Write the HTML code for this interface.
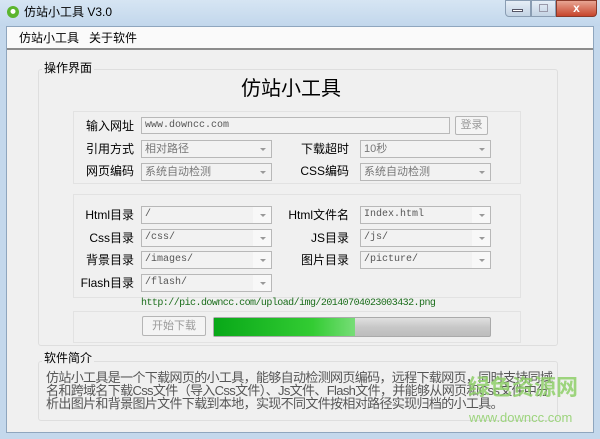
<!DOCTYPE html>
<html><head><meta charset="utf-8"><style>
*{margin:0;padding:0;box-sizing:border-box}
body{width:600px;height:439px;overflow:hidden;background:#c4d8ec;font-family:"Liberation Sans","Noto Sans CJK SC",sans-serif;font-size:12px;color:#000;position:relative}
.a{position:absolute}
.lbl{position:absolute;text-align:right;width:90px;font-size:12px;line-height:16px}
.inp{position:absolute;background:#f2f2f2;border:1px solid #b8b8b8;font-family:"Liberation Mono","Noto Sans CJK SC",monospace;font-size:10px;color:#555;padding-left:3px;line-height:16px;height:17px}
.cb{position:absolute;background:#f2f2f2;border:1px solid #b8b8b8;font-size:11px;color:#777;padding-left:3px;line-height:16px;height:18px}
.cb:after{content:"";position:absolute;right:5px;top:7px;border:3px solid transparent;border-top:3px solid #999}
.cb.m{font-family:"Liberation Mono","Noto Sans CJK SC",monospace;font-size:10px;color:#555}
.cb.m:before{content:"";position:absolute;right:0;top:0;width:18px;height:16px;background:#f8f8f8}
.grp{position:absolute;border:1px solid #dedede;border-radius:3px}
.pn{position:absolute;border:1px solid #e2e2e2;background:#f0f0f0}
</style></head><body>
<div class="a" style="left:0;top:0;width:600px;height:26px;background:linear-gradient(#d6e5f3,#c2d7ec)"></div>
<div class="a" style="left:7px;top:6px;width:12px;height:12px;border-radius:50%;background:radial-gradient(circle at 50% 45%,#fff 0 25%,#5bb52e 30% 100%)"></div>
<div class="a" style="left:24px;top:5px;font-size:12px;line-height:14px">仿站小工具 V3.0</div>
<div class="a" style="left:505px;top:0;width:26px;height:17px;background:linear-gradient(#e6eef7,#c3d3e4);border:1px solid #8a9db3;border-radius:0 0 0 4px"></div>
<div class="a" style="left:512px;top:9px;width:11px;height:3px;background:#fff;border:1px solid #556"></div>
<div class="a" style="left:531px;top:0;width:25px;height:17px;background:linear-gradient(#e6eef7,#c3d3e4);border:1px solid #8a9db3"></div>
<div class="a" style="left:539px;top:4px;width:9px;height:8px;border:1px solid #99a"></div>
<div class="a" style="left:556px;top:0;width:41px;height:17px;background:linear-gradient(#e8a593,#c7452c);border:1px solid #8a3a2a;border-radius:0 0 4px 0;color:#fff;font-weight:bold;text-align:center;font-size:12px;line-height:15px">x</div>
<div class="a" style="left:6px;top:26px;width:588px;height:407px;background:#f0f0f0;border:1px solid #8fa6be"></div>
<div class="a" style="left:7px;top:27px;width:586px;height:22px;background:#fafafa"></div>
<div class="a" style="left:7px;top:48px;width:586px;height:2px;background:#8c8c8c"></div>
<div class="a" style="left:19px;top:31px;line-height:14px">仿站小工具</div>
<div class="a" style="left:89px;top:31px;line-height:14px">关于软件</div>

<div class="grp" style="left:38px;top:69px;width:520px;height:277px"></div>
<div class="a" style="left:42px;top:61px;background:#f0f0f0;padding:0 2px;line-height:14px">操作界面</div>
<div class="a" style="left:0;top:76px;width:582px;text-align:center;font-size:20px;line-height:26px">仿站小工具</div>

<div class="pn" style="left:73px;top:111px;width:448px;height:73px"></div>
<div class="lbl" style="left:44px;top:118px">输入网址</div>
<div class="inp" style="left:141px;top:117px;width:309px">www.downcc.com</div>
<div class="a" style="left:455px;top:116px;width:33px;height:19px;border:1px solid #b5b5b5;border-radius:2px;background:#f4f4f4;color:#999;font-size:11px;text-align:center;line-height:17px">登录</div>
<div class="lbl" style="left:44px;top:141px">引用方式</div>
<div class="cb" style="left:141px;top:140px;width:131px">相对路径</div>
<div class="lbl" style="left:259px;top:141px">下载超时</div>
<div class="cb" style="left:360px;top:140px;width:131px">10秒</div>
<div class="lbl" style="left:44px;top:163px">网页编码</div>
<div class="cb" style="left:141px;top:163px;width:131px">系统自动检测</div>
<div class="lbl" style="left:259px;top:163px">CSS编码</div>
<div class="cb" style="left:360px;top:163px;width:131px">系统自动检测</div>

<div class="pn" style="left:73px;top:194px;width:448px;height:104px"></div>
<div class="lbl" style="left:44px;top:207px">Html目录</div>
<div class="cb m" style="left:141px;top:206px;width:131px">/</div>
<div class="lbl" style="left:259px;top:207px">Html文件名</div>
<div class="cb m" style="left:360px;top:206px;width:131px">Index.html</div>
<div class="lbl" style="left:44px;top:230px">Css目录</div>
<div class="cb m" style="left:141px;top:229px;width:131px">/css/</div>
<div class="lbl" style="left:259px;top:230px">JS目录</div>
<div class="cb m" style="left:360px;top:229px;width:131px">/js/</div>
<div class="lbl" style="left:44px;top:252px">背景目录</div>
<div class="cb m" style="left:141px;top:251px;width:131px">/images/</div>
<div class="lbl" style="left:259px;top:252px">图片目录</div>
<div class="cb m" style="left:360px;top:251px;width:131px">/picture/</div>
<div class="lbl" style="left:44px;top:275px">Flash目录</div>
<div class="cb m" style="left:141px;top:274px;width:131px">/flash/</div>
<div class="a" style="left:141px;top:298px;font-family:'Liberation Mono',monospace;font-size:10px;color:#1c6e1c;line-height:12px;letter-spacing:-0.55px">http://pic.downcc.com/upload/img/20140704023003432.png</div>

<div class="pn" style="left:73px;top:311px;width:448px;height:32px"></div>
<div class="a" style="left:142px;top:316px;width:64px;height:20px;border:1px solid #b5b5b5;border-radius:2px;background:#f4f4f4;color:#999;font-size:11px;text-align:center;line-height:18px">开始下载</div>
<div class="a" style="left:213px;top:317px;width:278px;height:20px;border:1px solid #aaa;border-radius:2px;background:linear-gradient(#e0e0e0,#c8c8c8 50%,#bdbdbd)"></div>
<div class="a" style="left:214px;top:318px;width:141px;height:18px;background:linear-gradient(90deg,#08a818,#33cc33 70%,#77dd77)"></div>

<div class="grp" style="left:38px;top:361px;width:520px;height:60px"></div>
<div class="a" style="left:42px;top:351px;background:#f0f0f0;padding:0 2px;line-height:14px">软件简介</div>
<div class="a" style="left:46px;top:371px;width:540px;white-space:nowrap;font-size:13px;letter-spacing:-0.65px;line-height:13px;color:#555">仿站小工具是一个下载网页的小工具，能够自动检测网页编码，远程下载网页，同时支持同域<br>名和跨域名下载Css文件（导入Css文件）、Js文件、Flash文件，并能够从网页和Css文件中分<br>析出图片和背景图片文件下载到本地，实现不同文件按相对路径实现归档的小工具。</div>
<div class="a" style="left:468px;top:374px;font-size:22px;line-height:28px;color:#8fd06a;opacity:.85;font-weight:bold">绿色资源网</div>
<div class="a" style="left:469px;top:410px;font-size:13px;line-height:15px;color:#8fd06a;opacity:.85">www.downcc.com</div>
</body></html>
